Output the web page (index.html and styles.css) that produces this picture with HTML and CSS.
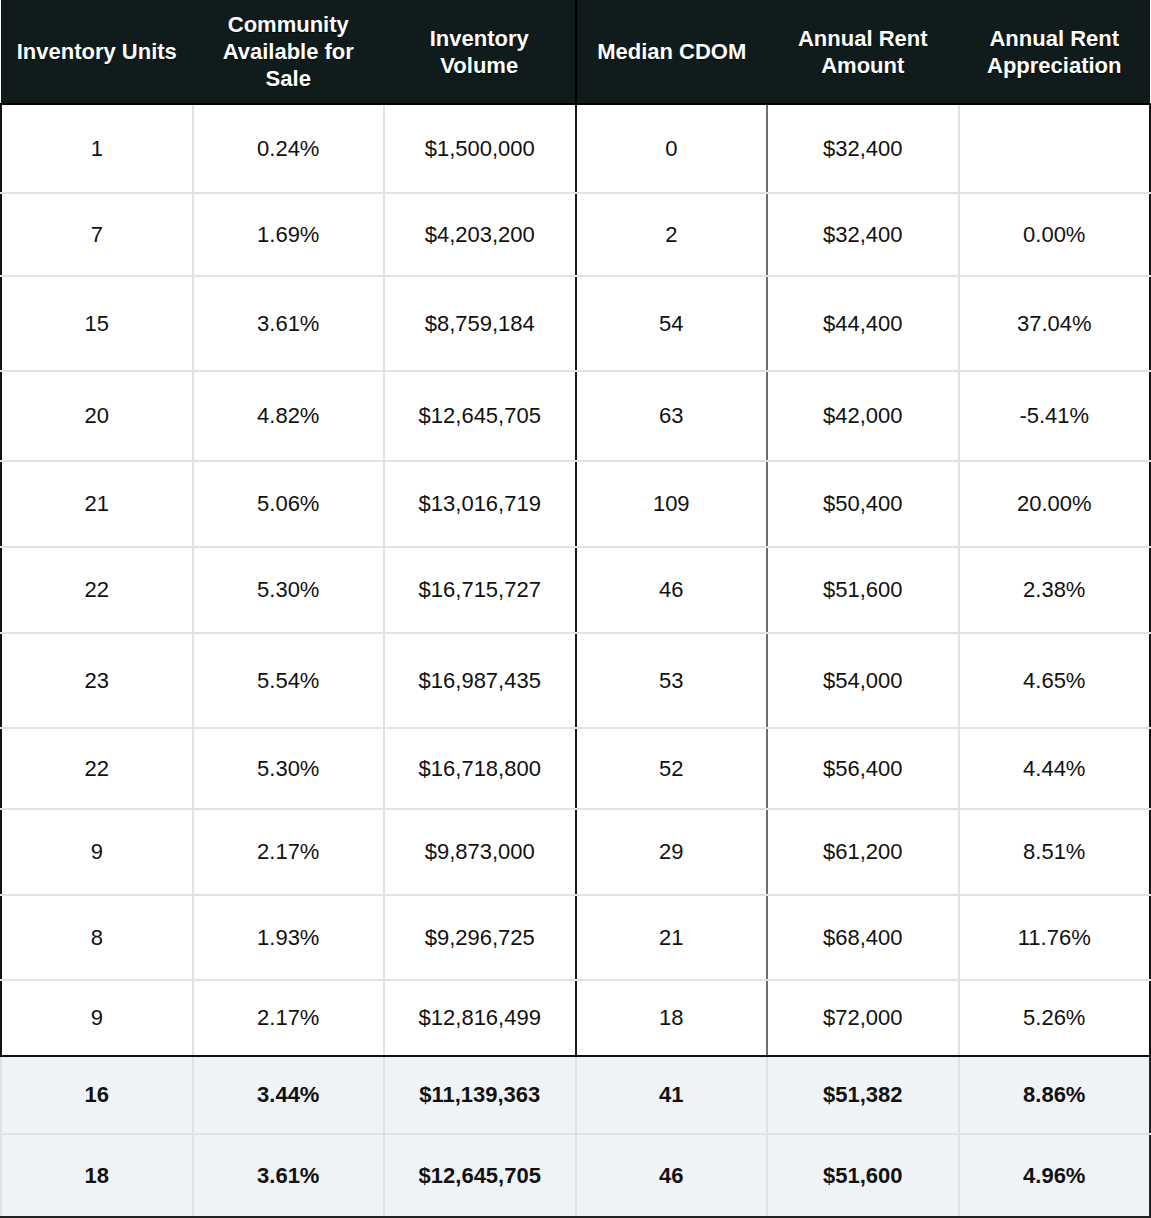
FILE: index.html
```html
<!DOCTYPE html>
<html>
<head>
<meta charset="utf-8">
<link rel="stylesheet" href="styles.css">
</head>
<body>
<table class="stats">
  <thead>
    <tr>
      <th>Inventory Units</th>
      <th>Community Available for Sale</th>
      <th class="c3">Inventory Volume</th>
      <th>Median CDOM</th>
      <th>Annual Rent Amount</th>
      <th>Annual Rent Appreciation</th>
    </tr>
  </thead>
  <tbody>
    <tr class="r1"><td>1</td><td>0.24%</td><td>$1,500,000</td><td>0</td><td>$32,400</td><td></td></tr>
    <tr class="r2"><td>7</td><td>1.69%</td><td>$4,203,200</td><td>2</td><td>$32,400</td><td>0.00%</td></tr>
    <tr class="r3"><td>15</td><td>3.61%</td><td>$8,759,184</td><td>54</td><td>$44,400</td><td>37.04%</td></tr>
    <tr class="r4"><td>20</td><td>4.82%</td><td>$12,645,705</td><td>63</td><td>$42,000</td><td>-5.41%</td></tr>
    <tr class="r5"><td>21</td><td>5.06%</td><td>$13,016,719</td><td>109</td><td>$50,400</td><td>20.00%</td></tr>
    <tr class="r6"><td>22</td><td>5.30%</td><td>$16,715,727</td><td>46</td><td>$51,600</td><td>2.38%</td></tr>
    <tr class="r7"><td>23</td><td>5.54%</td><td>$16,987,435</td><td>53</td><td>$54,000</td><td>4.65%</td></tr>
    <tr class="r8"><td>22</td><td>5.30%</td><td>$16,718,800</td><td>52</td><td>$56,400</td><td>4.44%</td></tr>
    <tr class="r9"><td>9</td><td>2.17%</td><td>$9,873,000</td><td>29</td><td>$61,200</td><td>8.51%</td></tr>
    <tr class="r10"><td>8</td><td>1.93%</td><td>$9,296,725</td><td>21</td><td>$68,400</td><td>11.76%</td></tr>
    <tr class="r11 last"><td>9</td><td>2.17%</td><td>$12,816,499</td><td>18</td><td>$72,000</td><td>5.26%</td></tr>
  </tbody>
  <tfoot>
    <tr class="s1"><td>16</td><td>3.44%</td><td>$11,139,363</td><td>41</td><td>$51,382</td><td>8.86%</td></tr>
    <tr class="s2"><td>18</td><td>3.61%</td><td>$12,645,705</td><td>46</td><td>$51,600</td><td>4.96%</td></tr>
  </tfoot>
</table>
</body>
</html>
```

FILE: styles.css
```css
html, body {
  margin: 0;
  padding: 0;
  background: #ffffff;
}

.stats {
  width: 1151px;
  border-collapse: collapse;
  table-layout: fixed;
  font-family: "Liberation Sans", Arial, Helvetica, sans-serif;
  color: #111111;
}

.stats th {
  height: 103px;
  padding: 0 8px;
  background: #101c1c;
  color: #ffffff;
  font-size: 22px;
  line-height: 27px;
  font-weight: bold;
  text-align: center;
  vertical-align: middle;
  text-shadow: 0 1px 1px rgba(0, 0, 0, 0.7);
  border: none;
  border-bottom: 2px solid #000000;
}

.stats th.c3 {
  border-right: 2px solid #000000;
}

.stats td {
  padding: 0;
  font-size: 22px;
  text-align: center;
  vertical-align: middle;
  border: 2px solid #e2e2e2;
}

.stats tbody td:first-child {
  border-left: 2px solid #111111;
}

.stats tbody td:last-child {
  border-right: 2px solid #111111;
}

.stats tbody td:nth-child(3) {
  border-right: 2px solid #1a1a1a;
}

.stats tbody td:nth-child(4) {
  border-right: 2px solid #6e6e6e;
}

.stats tbody tr.last td {
  border-bottom: 2px solid #111111;
}

.stats tfoot td {
  background: #f0f3f6;
  font-weight: bold;
}

.stats tfoot td:last-child {
  border-right: 2px solid #222222;
}

.stats tfoot tr.s2 td {
  border-bottom: 2px solid #222222;
}

.r1 { height: 89px; }
.r2 { height: 83px; }
.r3 { height: 95px; }
.r4 { height: 90px; }
.r5 { height: 86px; }
.r6 { height: 86px; }
.r7 { height: 95px; }
.r8 { height: 81px; }
.r9 { height: 86px; }
.r10 { height: 85px; }
.r11 { height: 76px; }
.s1 { height: 78px; }
.s2 { height: 83px; }
```
